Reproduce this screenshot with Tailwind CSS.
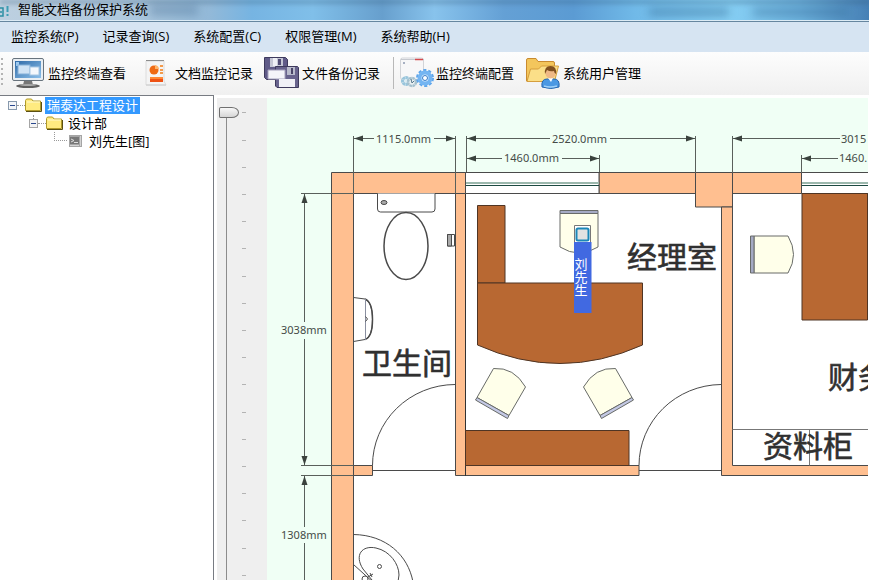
<!DOCTYPE html>
<html lang="zh-CN">
<head>
    <meta charset="UTF-8">
    <meta name="viewport" content="width=device-width, initial-scale=1.0">
    <title>智能文档备份保护系统</title>
    <script src="https://cdn.jsdelivr.net/npm/@tailwindcss/browser@4"></script>
</head>
<body class="h-screen flex flex-col overflow-hidden bg-white text-[13px] leading-4 text-black font-['Open_Sans','Noto_Sans_CJK_SC',sans-serif]">
    <!-- Title bar -->
    <header class="relative h-[22px] shrink-0 flex items-center overflow-hidden border-b border-[#66869f] bg-[linear-gradient(to_right,#bdd0e0_0%,#b0c9de_14%,#93b9d8_24%,#76b4e2_29%,#80bfe9_36%,#679fcd_44%,#88c3ec_50%,#64a0d5_58%,#5b9bd3_66%,#70b9e8_73%,#86cff4_84%,#6eb3df_92%,#4680b5_100%)]">
        <div class="absolute inset-x-0 top-0 h-1 bg-[#31536f]/30 blur-[2px]"></div>
        <div class="absolute left-[150px] top-1 w-12 h-3 bg-[#466e91]/35 blur-xs"></div>
        <div class="absolute right-[140px] top-2 w-20 h-2 bg-[#2f6690]/45 blur-xs"></div>
        <div class="absolute right-5 top-2 w-24 h-2 bg-[#2f6690]/40 blur-xs"></div>
        <div class="absolute inset-x-0 bottom-0 h-px bg-[#dcebf5]"></div>
        <svg class="relative w-[18px] h-4 shrink-0" viewBox="0 0 18 16" fill="none">
            <path d="M0 5h3v8H0M0 9h2" stroke="#2b8fa3" stroke-width="1.5"/>
            <path d="M7.500 3v6M7.500 11v2" stroke="#3d9db4" stroke-width="2"/>
        </svg>
        <h1 class="relative -mt-1">智能文档备份保护系统</h1>
    </header>

    <!-- Menu -->
    <nav class="h-[30px] shrink-0 flex items-center gap-6 pl-[11px] pb-0.5 bg-[#d6e4f2] whitespace-nowrap">
        <button>监控系统(P)</button>
        <button>记录查询(S)</button>
        <button>系统配置(C)</button>
        <button>权限管理(M)</button>
        <button>系统帮助(H)</button>
    </nav>

    <!-- Toolbar -->
    <div class="h-[43px] shrink-0 flex items-center gap-[13px] pb-0.5 bg-linear-to-b from-[#fdfdfd] to-[#f0f0f0] whitespace-nowrap">
        <div class="flex items-center gap-2">
            <svg class="w-1 h-8" viewBox="0 0 4 32" fill="#b4b4b4">
                <path d="M1 1h2v2H1zM1 6h2v2H1zM1 11h2v2H1zM1 16h2v2H1zM1 21h2v2H1zM1 26h2v2H1z"/>
            </svg>
            <button class="flex items-center gap-1">
                <svg class="w-8 h-8" viewBox="0 0 32 32">
                    <defs>
                        <linearGradient id="screen" x1="0" y1="0" x2="1" y2="1">
                            <stop offset="0" stop-color="#2f6ba8"/>
                            <stop offset="1" stop-color="#8cc0ea"/>
                        </linearGradient>
                    </defs>
                    <path d="M12 24h8l1 4h-10z" fill="#777"/>
                    <ellipse cx="16" cy="29" rx="12" ry="2" fill="#606060"/>
                    <ellipse cx="16" cy="28" rx="8" ry="1" fill="#aaa"/>
                    <rect x=".5" y="1.500" width="31" height="22" rx="1.500" fill="#e8eef3" stroke="#68737d"/>
                    <rect x="3" y="4" width="26" height="17" fill="url(#screen)"/>
                    <rect x="4" y="5" width="3" height="4" fill="#9cc8ee"/>
                    <rect x="6" y="8" width="12" height="9" fill="#cfe3f5" stroke="#83afd8"/>
                    <rect x="18" y="10" width="9" height="8" fill="#f4f8fc" stroke="#a7c7e3"/>
                </svg>
                监控终端查看
            </button>
        </div>
        <button class="flex items-center gap-1">
            <svg class="w-8 h-8" viewBox="0 0 32 32">
                <path d="M7 4h18v20l2 4H7z" fill="#f4f4f4" stroke="#dcdcdc"/>
                <path d="M7 3.500h18" stroke="#8d8d8d"/>
                <circle cx="15" cy="13" r="4.500" fill="#ef6a14"/>
                <path d="M16 8a4.500 4.500 0 0 1 4 4h-4z" fill="#ffb469"/>
                <path d="M21 9h3M21 13h3M21 16h3" stroke="#f39a4c" stroke-width="2"/>
                <path d="M11 20h13v5H11z" fill="#ee5214"/>
                <path d="M11 20h13v2H11z" fill="#ff8835"/>
                <path d="M7 28h20" stroke="#ccc"/>
            </svg>
            文档监控记录
        </button>
        <button class="flex items-center gap-1">
            <svg class="w-8 h-8 overflow-visible" viewBox="0 0 32 32">
                <path d="M-1.500.5h21l2 2v20h-21l-2-2z" fill="#605b88" stroke="#3e3a5d"/>
                <path d="M4 1h13v9H4z" fill="#c5c7d5"/>
                <path d="M7 1h4v8H7z" fill="#eeeff5"/>
                <path d="M12 2h3v6h-3z" fill="#514c75"/>
                <path d="M9.500 9.500h22l1 1v20H11l-1.500-1.500z" fill="#68638d" stroke="#3e3a5d"/>
                <path d="M21 10h8v8h-8z" fill="#b9bbcc"/>
                <path d="M25 11h2v6h-2z" fill="#494467"/>
                <path d="M2 13h17v9H2z" fill="#f4f4f9" stroke="#a5a2bd"/>
                <path d="M13 22h16v8H13z" fill="#f1f1f7"/>
            </svg>
            文件备份记录
        </button>
        <div class="flex items-center gap-1.5">
            <div class="w-px h-8 bg-[#b8b8b8]"></div>
            <button class="flex items-center gap-1">
                <svg class="w-8 h-8 overflow-visible" viewBox="0 0 32 32">
                    <path d="M.5 3q0-2 2-2h19q2 0 2 2v17q0 3-3 3H3q-2.500 0-2.500-3z" fill="#f7f7f8" stroke="#d2d4d8"/>
                    <path d="M1 2.500h23" stroke="#c6c9cf"/>
                    <path d="M15 2.500h8" stroke="#d7494c" stroke-width="1.500"/>
                    <circle cx="4" cy="6" r="1" fill="#8c99b0"/>
                    <circle cx="6" cy="24" r="3.500" fill="#dcecf3" stroke="#99c5dc" stroke-width="3" stroke-dasharray="2.700 .4"/>
                    <circle cx="12" cy="25" r="4" fill="#e8eef1" stroke="#a4c0ce" stroke-width="2.500" stroke-dasharray="2.600 .5"/>
                    <path d="M11 22l1 4 2-2" stroke="#55788c" fill="none"/>
                    <circle cx="25" cy="21" r="8" fill="none" stroke="#5da5ea" stroke-width="2" stroke-dasharray="3.100 2"/>
                    <circle cx="25" cy="21" r="5.500" fill="#e4f1fd" stroke="#74b5f2" stroke-width="4"/>
                    <circle cx="25" cy="21" r="2.500" fill="#fff" stroke="#367cc9"/>
                </svg>
                监控终端配置
            </button>
        </div>
        <button class="flex items-center gap-1">
            <svg class="w-8 h-8 overflow-visible" viewBox="0 0 32 32">
                <path d="M-.5 24V3q0-1.500 1.500-1.500h8l2 3h15q1.500 0 1.500 1.500v18z" fill="#f3c65c" stroke="#c98b2f"/>
                <path d="M0 24.500 3.500 12h8l3-3h17l-4 15.500z" fill="#fbdf88" stroke="#d59e3d"/>
                <path d="M15 30q-1-8 5-8h7q6 0 5 8-8 3-17 0z" fill="#4a98e3" stroke="#2465ad"/>
                <path d="M17 29q6 2 13 0" stroke="#9ed0f9" stroke-width="1.500" fill="none"/>
                <path d="M21 21h5l-2 4z" fill="#fff"/>
                <circle cx="23.500" cy="16.500" r="5" fill="#efb986"/>
                <path d="M18 17q-1-8 5.500-8T29 17q-2-1-2-3-4 1-7-1z" fill="#80501f"/>
            </svg>
            系统用户管理
        </button>
    </div>

    <div class="flex-1 min-h-0 flex">
        <!-- Device tree -->
        <aside class="w-[214px] shrink-0 border-t border-r border-[#777b82] bg-white whitespace-nowrap">
            <svg class="hidden">
                <symbol id="folder" viewBox="0 0 17 14">
                    <path d="M.5 12.500v-10l1-1.500h5l1.500 2h7.500v9.500z" fill="#ffeb80" stroke="#b09a2a"/>
                    <path d="M2 4h13" stroke="#fffad0"/>
                    <path d="M1 13.500h15.500V4" stroke="#5c5013" fill="none"/>
                </symbol>
            </svg>
            <ul>
                <li>
                    <div class="h-[18px] flex items-center pl-2">
                        <button class="w-[9px] h-[9px] flex items-center justify-center border border-[#8799ad] bg-[#f3f5f8]" aria-label="折叠"><span class="w-[5px] h-px bg-[#29488e]"></span></button>
                        <span class="w-2 border-t border-dotted border-[#999]"></span>
                        <svg class="w-[17px] h-3.5"><use href="#folder"/></svg>
                        <span class="ml-[3px] px-0.5 h-[17px] bg-[#3399ff] text-white">瑞泰达工程设计</span>
                    </div>
                    <ul>
                        <li>
                            <div class="h-[18px] flex items-center pl-[29px]">
                                <span class="flex flex-col items-center">
                                    <span class="h-1 border-l border-dotted border-[#999]"></span>
                                    <button class="w-[9px] h-[9px] flex items-center justify-center border border-[#a5a5a5] bg-[#f3f3f3]" aria-label="折叠"><span class="w-[5px] h-px bg-[#29488e]"></span></button>
                                    <span class="h-1"></span>
                                </span>
                                <span class="w-2 border-t border-dotted border-[#999]"></span>
                                <svg class="w-[17px] h-3.5"><use href="#folder"/></svg>
                                <span class="ml-[3px] px-0.5">设计部</span>
                            </div>
                            <ul>
                                <li class="h-[18px] flex items-center pl-[54px]">
                                    <span class="w-[13px] h-[9px] mb-[9px] border-l border-b border-dotted border-[#999]"></span>
                                    <svg class="w-[17px] h-3.5" viewBox="0 0 17 14">
                                        <path d="M2 1h13v12H2z" fill="#a5a5a5"/>
                                        <path d="M3 3h9v7H3z" fill="#777"/>
                                        <path d="M4 5l3 1.500-3 1.500M7 8.500h4" stroke="#ddd" fill="none"/>
                                        <path d="M13.500 2v10M3 11.500h9" stroke="#d4d4d4"/>
                                    </svg>
                                    <span class="ml-[3px] px-0.5">刘先生[图]</span>
                                </li>
                            </ul>
                        </li>
                    </ul>
                </li>
            </ul>
        </aside>

        <!-- Zoom slider -->
        <div class="w-[50px] ml-[3px] mt-[3px] pl-0.5 shrink-0 flex bg-[#efefef]">
            <input type="range" min="0" max="20" value="0" aria-label="缩放" class="mt-[9px] w-5 appearance-none [writing-mode:vertical-lr] bg-[linear-gradient(to_right,transparent_7px,#8c8c8c_7px,#8c8c8c_8px,transparent_8px)] [&::-webkit-slider-thumb]:appearance-none [&::-webkit-slider-thumb]:w-5 [&::-webkit-slider-thumb]:h-[11px] [&::-webkit-slider-thumb]:border [&::-webkit-slider-thumb]:border-[#707070] [&::-webkit-slider-thumb]:rounded-[2px_8px_8px_2px/2px_6px_6px_2px] [&::-webkit-slider-thumb]:bg-linear-to-b [&::-webkit-slider-thumb]:from-[#f8f8f8] [&::-webkit-slider-thumb]:to-[#d6d6d6]">
            <svg class="w-2 h-full ml-0.5">
                <pattern id="ticks" width="8" height="136" patternUnits="userSpaceOnUse">
                    <path d="M1 14.500h4M1 42.500h4M1 69.500h4M1 96.500h4M1 123.500h4" stroke="#b3b3b3"/>
                </pattern>
                <rect width="8" height="100%" fill="url(#ticks)"/>
            </svg>
        </div>

        <!-- Floor plan -->
        <main class="flex-1 min-w-0 mt-[3px] mr-px bg-[#f0fff5] overflow-hidden">
            <svg class="w-full h-full" viewBox="267 98 601 482" preserveAspectRatio="xMinYMin slice" fill="none" stroke="#4a4a4a">
                <defs>
                    <marker id="arrow" markerUnits="userSpaceOnUse" markerWidth="10" markerHeight="8" refX="9" refY="4" orient="auto">
                        <path d="M0 1l9 3-9 3z" fill="#3a423d" stroke="none"/>
                    </marker>
                </defs>

                <path d="M353 193h520v400H353z" fill="#fff" stroke="none"/>

                <!-- walls -->
                <g fill="#ffbf90">
                    <path d="M331.500 172.500H465.500V193.500H353.500V600H331.500z"/>
                    <path d="M599 172.500H695.500V193.500H599zM732.500 172.500H801.500V193.500H732.500z"/>
                    <path d="M695.500 172.500H732.500V207H695.500z"/>
                    <path d="M455.500 193.500H465.500V465.500H639V475.500H455.500z"/>
                    <path d="M721.500 207H732.500V465.500H880V475.500H721.500z"/>
                    <path d="M353.500 465.500H372.500V475.500H353.500z"/>
                </g>
                <path d="M465.500 172V476" stroke="#333"/>

                <!-- windows -->
                <g>
                    <path d="M465.500 172.500H599V193.500H465.500zM801.500 172.500H880V193.500H801.500z" fill="#fff"/>
                    <path d="M466 183H599M802 183H880" stroke="#9cb8ad" stroke-width="2"/>
                    <path d="M466 185.500H599M802 185.500H880" stroke="#1d4a42"/>
                </g>

                <!-- doors -->
                <path d="M372.500 470.500H455M372.500 465.500A83 81 0 0 1 455 384.500M639 470.500H721M639 465.500A83 81 0 0 1 721 384.500"/>

                <!-- dimension lines -->
                <g stroke="#59605b">
                    <path d="M353.500 136V193M455.500 136V193M466.500 136V172M695.500 136V172M732.500 136V172M599.500 155V172M801.500 155V172"/>
                    <path d="M301 193.500H353M301 465.500H353M301 475.500H353M304.500 543V590"/>
                    <g marker-end="url(#arrow)">
                        <path d="M374 138.500H354"/>
                        <path d="M434 138.500H455"/>
                        <path d="M550 138.500H467"/>
                        <path d="M610 138.500H695"/>
                        <path d="M840 138.500H733"/>
                        <path d="M502 158.500H467"/>
                        <path d="M562 158.500H599"/>
                        <path d="M838 158.500H802"/>
                        <path d="M304.500 322V194"/>
                        <path d="M304.500 339V465"/>
                        <path d="M304.500 527V476"/>
                    </g>
                </g>
                <g class="text-[11px] font-['Noto_Sans',sans-serif]" fill="#454b47" stroke="none">
                    <text x="376" y="143">1115.0mm</text>
                    <text x="552" y="143">2520.0mm</text>
                    <text x="504" y="162">1460.0mm</text>
                    <text x="841" y="143">3015</text>
                    <text x="839" y="162">1460.</text>
                    <text x="281" y="334">3038mm</text>
                    <text x="281" y="539">1308mm</text>
                </g>

                <!-- bathroom -->
                <path d="M377.500 193.500V209q0 3 3 3H432q3 0 3-3V193.500" fill="#fff"/>
                <ellipse cx="384" cy="202.500" rx="3" ry="2" fill="#aaa"/>
                <ellipse cx="406" cy="246" rx="22" ry="33.500" stroke-width="1.500" fill="#fff"/>
                <path d="M447.500 234.500H454.500V246H447.500z" fill="#fff"/>
                <path d="M447.500 234.500H451.500V246H447.500z" fill="#aaa"/>
                <path d="M353.500 297.500 365 299Q372.500 302 372.500 319.500T365 339.500L353.500 341.500"/>
                <path d="M365 299Q372.500 302 372.500 319.500T365 339.500" stroke-width="1.500"/>
                <path d="M365.500 299V340" stroke="#8a8fa0"/>
                <path d="M365.500 316.500l2 2.500-2 2.500"/>
                <path d="M353.500 534.500C386 535 408 555 413 582M353.500 564.500 375 584"/>
                <path d="M363 569C354 555 362 545 376 548S399 564 399 575q0 6-3 8M363 569l9 11"/>
                <circle cx="379.500" cy="566.500" r="2"/>
                <circle cx="365" cy="579" r="3"/>
                <path d="M368 577l5-3M370 573l2 4"/>

                <!-- desks -->
                <g fill="#b86832" stroke="#4f3524">
                    <path d="M477.500 205.500H505V283H477.500z"/>
                    <path d="M477.500 283H642.500V345Q560 382 477.500 345z"/>
                    <path d="M465.500 430.500H629V465.500H465.500z"/>
                    <path d="M802 193.500H867.500V320H802z"/>
                </g>

                <!-- chairs -->
                <g fill="#ffffea" stroke="#686b68">
                    <path d="M560 213.500H598V247Q579 259 560 247z"/>
                    <path d="M560 210.500H598V213.500H560z" fill="#a5aac4"/>
                    <path d="M754 236H788Q799 254.500 788 273H754z"/>
                    <path d="M750.500 236H754V273H750.500z" fill="#a5aac4"/>
                    <g id="guest">
                        <path d="M493.500 368.500Q514 367 525.500 387L509 415.500 477 397.500z"/>
                        <path d="M477 397.500 509 415.500 507.500 418.500 475.500 400z" fill="#c3c8e4"/>
                    </g>
                    <use href="#guest" transform="translate(1109 0) scale(-1 1)"/>
                </g>

                <!-- filing cabinet -->
                <path d="M732.500 429.500H880M809.500 429.500V465.500" stroke="#777"/>

                <!-- room names -->
                <g class="text-[30px] font-['Noto_Sans_CJK_SC',sans-serif]" fill="#303030" stroke="#303030" stroke-width=".6">
                    <text x="362" y="374">卫生间</text>
                    <text x="627" y="268">经理室</text>
                    <text x="828" y="388">财务</text>
                    <text x="763" y="457">资料柜</text>
                </g>

                <!-- terminal -->
                <path d="M574.500 225.500H590.500V242.500H574.500z" fill="#fff" stroke="#777"/>
                <rect x="576.500" y="228.500" width="12" height="12" rx="1.500" fill="#e2e2e2" stroke="#1b87b8" stroke-width="2"/>
                <path d="M574 242H591.500V313H574z" fill="#4169e1" stroke="none"/>
                <text x="581" y="258" class="text-[13px] [writing-mode:vertical-rl] font-['Noto_Sans_CJK_SC',sans-serif]" fill="#fff" stroke="none">刘先生</text>
            </svg>
        </main>
    </div>
</body>
</html>
